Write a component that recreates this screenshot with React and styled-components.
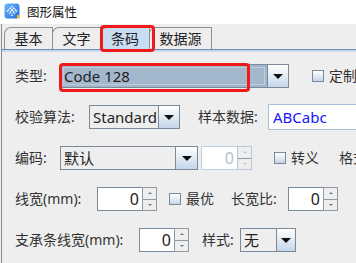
import React from "react";
import styled, { createGlobalStyle } from "styled-components";

const Global = createGlobalStyle`
  html, body { margin: 0; padding: 0; background: #eeeeee; }
  body { font-family: "Noto Sans", "Noto Sans CJK SC", sans-serif; color: #333; }
`;

const Page = styled.div`
  width: 356px;
  height: 263px;
  overflow: hidden;
  background: #eeeeee;
  display: flex;
  flex-direction: column;
`;

const TitleBar = styled.div`
  height: 24px;
  flex: none;
  background: #fff;
  display: flex;
  align-items: center;
  gap: 7px;
  padding: 0 0 2px 4px;
  box-sizing: border-box;
  font-size: 12.5px;
  color: #111;
`;

const Window = styled.div`
  flex: 1;
  margin-left: 1px;
  border-left: 1px solid #8a8a8a;
  display: flex;
  flex-direction: column;
`;

const TabStrip = styled.div`
  position: relative;
  height: 25px;
  flex: none;
  display: flex;
  align-items: flex-end;
  padding-left: 2px;
  border-bottom: 1px solid #6d89b3;
`;

const Tab = styled.div`
  width: ${(p) => p.w}px;
  height: 22px;
  box-sizing: border-box;
  border: 1px solid #8e8f8f;
  border-bottom: none;
  border-top-left-radius: 7px;
  margin-right: -1px;
  background: ${(p) => (p.active ? "#c8ddf2" : "#eeeeee")};
  display: flex;
  align-items: center;
  justify-content: center;
  font-size: 14px;
  line-height: 1;
  color: #222;
`;

const Mark = styled.div`
  position: absolute;
  left: ${(p) => p.x}px;
  top: ${(p) => p.y}px;
  width: ${(p) => p.w}px;
  height: ${(p) => p.h}px;
  box-sizing: border-box;
  border: 3px solid #f01a1a;
  border-radius: 4px;
  pointer-events: none;
`;

const Band = styled.div`
  height: 2px;
  flex: none;
  background: #c8daee;
`;

const Body = styled.div`
  display: flex;
  flex-direction: column;
  gap: 15px;
  padding: 11px 0 0 13px;
`;

const Row = styled.div`
  height: 26px;
  display: flex;
  align-items: center;
  white-space: nowrap;
`;

const Label = styled.div`
  width: ${(p) => p.w}px;
  flex: none;
  font-size: 14px;
  line-height: 1;
  color: #333;
  margin-left: ${(p) => p.ml || 0}px;
`;

const Combo = styled.div`
  position: relative;
  width: ${(p) => p.w}px;
  height: 24px;
  flex: none;
  display: flex;
  box-sizing: border-box;
  border: 1px solid #7a8a99;
`;

const ComboField = styled.div`
  flex: 1;
  display: flex;
  align-items: center;
  padding-left: 3px;
  font-size: 15px;
  line-height: 1;
  color: #222;
  background: ${(p) => (p.selected ? "#a3b8cc" : "#eeeeee")};
  box-shadow: ${(p) => (p.selected ? "inset 0 0 0 2px #a3b8cc, inset 0 0 0 3px #bccbda" : "none")};
`;

const ArrowBtn = styled.div`
  width: ${(p) => p.w || 20}px;
  flex: none;
  box-sizing: border-box;
  border-left: 1px solid #7a8a99;
  background: linear-gradient(#ffffff, #c4d6e9);
  display: flex;
  align-items: center;
  justify-content: center;
  &::after {
    content: "";
    border-left: 5px solid transparent;
    border-right: 5px solid transparent;
    border-top: 5px solid #111;
  }
`;

const Spin = styled.div`
  display: flex;
  height: 24px;
  flex: none;
  margin-left: ${(p) => p.ml || 0}px;
`;

const SpinField = styled.div`
  width: ${(p) => p.w}px;
  box-sizing: border-box;
  border: 1px solid ${(p) => (p.disabled ? "#b8cfe5" : "#7a8a99")};
  border-right: none;
  background: #fff;
  display: flex;
  align-items: center;
  justify-content: flex-end;
  padding-right: 3px;
  font-size: 16px;
  line-height: 1;
  color: ${(p) => (p.disabled ? "#b0bfcf" : "#222")};
`;

const SpinBtns = styled.div`
  width: 15px;
  display: flex;
  flex-direction: column;
  box-sizing: border-box;
  border: 1px solid ${(p) => (p.disabled ? "#b8c8d8" : "#8e9aa6")};
`;

const SpinHalf = styled.div`
  flex: 1;
  display: flex;
  align-items: center;
  justify-content: center;
  background: #eeeeee;
  & + & { border-top: 1px solid ${(p) => (p.disabled ? "#b8c8d8" : "#8e9aa6")}; }
  &::after {
    content: "";
    border-left: 2px solid transparent;
    border-right: 2px solid transparent;
    ${(p) => (p.up ? "border-bottom" : "border-top")}: 2px solid ${(p) => (p.disabled ? "#c0c8d0" : "#777")};
  }
`;

const Check = styled.div`
  width: 12px;
  height: 12px;
  flex: none;
  box-sizing: border-box;
  border: 1px solid #7a8a99;
  background: linear-gradient(#ffffff, #c6d6e8);
  margin-left: ${(p) => p.ml || 0}px;
  margin-right: 5px;
`;

const CheckText = styled.div`
  font-size: 14px;
  line-height: 1;
  color: #333;
`;

const TextBox = styled.div`
  width: 110px;
  height: 26px;
  flex: none;
  box-sizing: border-box;
  border: 1px solid #a8c2de;
  background: #fff;
  display: flex;
  align-items: center;
  padding-left: 4px;
  font-size: 15px;
  line-height: 1;
  color: #1414ff;
`;

const Spinner = ({ value, fw, ml, disabled }) => (
  <Spin ml={ml}>
    <SpinField w={fw} disabled={disabled}>{value}</SpinField>
    <SpinBtns disabled={disabled}>
      <SpinHalf up disabled={disabled} />
      <SpinHalf disabled={disabled} />
    </SpinBtns>
  </Spin>
);

const AppIcon = () => (
  <svg width="16" height="16" viewBox="0 0 16 16">
    <defs>
      <linearGradient id="ig" x1="0" y1="0" x2="1" y2="1">
        <stop offset="0" stopColor="#6fb6ff" />
        <stop offset="1" stopColor="#1e6fd9" />
      </linearGradient>
    </defs>
    <rect x="0.5" y="0.5" width="15" height="15" rx="3" fill="url(#ig)" />
    <path d="M8 2.5 L13.5 8 L8 13.5 L2.5 8 Z" fill="#d7ecff" />
    {[[8, 5], [6, 7], [10, 7], [5, 9], [8, 9], [11, 9], [7, 11], [9, 11]].map(([cx, cy], i) => (
      <circle key={i} cx={cx} cy={cy} r="0.9" fill="#3a86e0" />
    ))}
    <rect x="13" y="12" width="2.5" height="3.5" fill="#f5b820" />
  </svg>
);

export default function App() {
  return (
    <Page>
      <Global />
      <TitleBar>
        <AppIcon />
        <span>图形属性</span>
      </TitleBar>
      <Window>
        <TabStrip>
          <Tab w={49}>基本</Tab>
          <Tab w={49}>文字</Tab>
          <Tab w={50} active>条码</Tab>
          <Tab w={63}>数据源</Tab>
          <Mark x={98} y={1} w={55} h={27} />
        </TabStrip>
        <Band />
        <Body>
          <Row>
            <Label w={45}>类型:</Label>
            <Combo w={229}>
              <ComboField selected>Code 128</ComboField>
              <ArrowBtn w={21} />
              <Mark x={-2} y={-2} w={191} h={29} />
            </Combo>
            <Check ml={23} />
            <CheckText>定制</CheckText>
          </Row>
          <Row>
            <Label w={74}>校验算法:</Label>
            <Combo w={91}>
              <ComboField>Standard</ComboField>
              <ArrowBtn w={21} />
            </Combo>
            <Label w={70} ml={18}>样本数据:</Label>
            <TextBox>ABCabc</TextBox>
          </Row>
          <Row>
            <Label w={45}>编码:</Label>
            <Combo w={138}>
              <ComboField>默认</ComboField>
              <ArrowBtn w={22} />
            </Combo>
            <Spinner value="0" fw={36} ml={3} disabled />
            <Check ml={22} />
            <CheckText>转义</CheckText>
            <Label w={40} ml={20}>格式</Label>
          </Row>
          <Row>
            <Label w={82}>线宽(mm):</Label>
            <Spinner value="0" fw={45} />
            <Check ml={12} />
            <CheckText>最优</CheckText>
            <Label w={57} ml={17}>长宽比:</Label>
            <Spinner value="0" fw={35} />
          </Row>
          <Row>
            <Label w={124}>支承条线宽(mm):</Label>
            <Spinner value="0" fw={35} />
            <Label w={38} ml={13}>样式:</Label>
            <Combo w={56}>
              <ComboField>无</ComboField>
              <ArrowBtn w={19} />
            </Combo>
          </Row>
        </Body>
      </Window>
    </Page>
  );
}
